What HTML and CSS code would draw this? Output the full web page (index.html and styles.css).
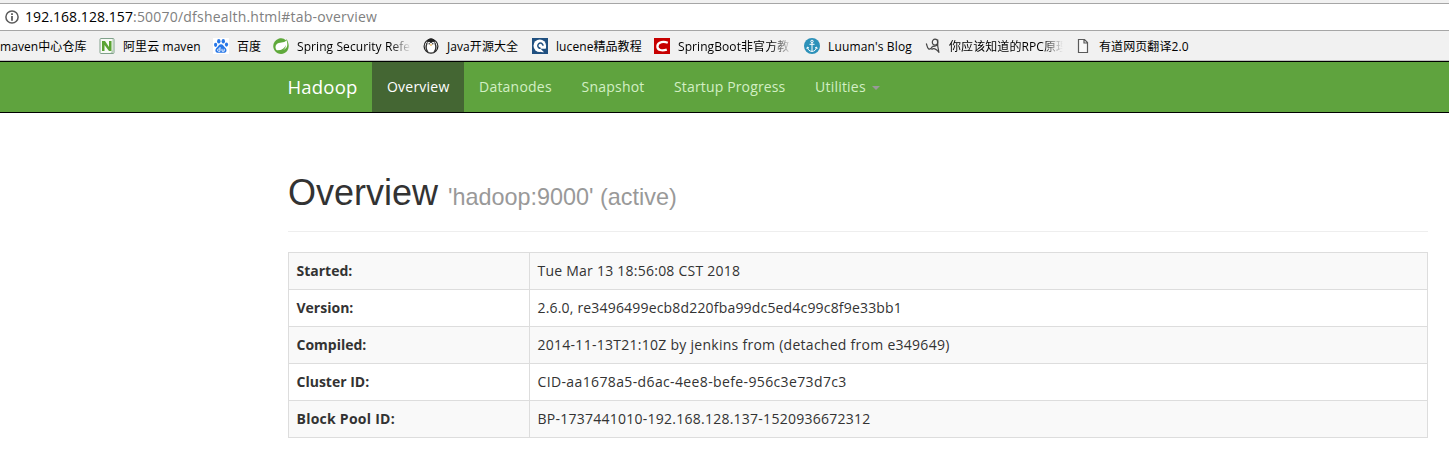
FILE: index.html
```html
<!DOCTYPE html>
<html lang="zh-CN">
<head>
<meta charset="utf-8">
<title>Namenode information</title>
<link rel="stylesheet" href="styles.css">
</head>
<body>
<div class="address">
  <svg class="info" width="14" height="14" viewBox="0 0 14 14"><circle cx="7" cy="7" r="6.1" fill="none" stroke="#5a5a5a" stroke-width="1.5"/><path d="M6.1 3.2h1.8v1.7H6.1zM6.1 6.1h1.8v4.6H6.1z" fill="#5a5a5a"/></svg>
  <span class="url"><span class="host">192.168.128.157</span><span class="path">:50070/dfshealth.html#tab-overview</span></span>
</div>
<div class="bookmarks">
  <div class="mark"><span class="label w87">maven中心仓库</span></div>
  <div class="mark">
    <svg width="16" height="16" viewBox="0 0 16 16"><rect x="1" y=".5" width="14" height="15" rx="1" fill="#f7faf5" stroke="#80a18b"/><path d="M13.5 1v11l-2 3H15V1z" fill="#b8ceb9"/><path d="M3 13V3h3l4 6V3h2.500v10H10L5.500 7v6z" fill="#59a332"/></svg>
    <span class="label w78">阿里云 maven</span>
  </div>
  <div class="mark">
    <svg width="16" height="16" viewBox="0 0 16 16"><path d="M0 0h16v16H0z" fill="#fff"/><g fill="#2878e8"><ellipse cx="5.800" cy="3.200" rx="1.700" ry="2.200"/><ellipse cx="10.300" cy="3.200" rx="1.700" ry="2.200"/><ellipse cx="2.600" cy="6.800" rx="1.600" ry="2.100"/><ellipse cx="13.500" cy="6.600" rx="1.600" ry="2.100"/><path d="M8 6.300c2 0 2.300 1.700 4 3.200 2.600 2.200 1.600 5.500-1.200 5.300-2-.2-3.600-.2-5.600 0C2.300 15 1.300 11.800 4 9.500 5.700 8 6 6.300 8 6.300z"/></g><path d="M7 9v4.300H5.500c-1.300 0-1.300-2.300 0-2.300H7M9 10.800v2.400h2.200v-2.400" fill="none" stroke="#fff" stroke-width=".9"/></svg>
    <span class="label w24">百度</span>
  </div>
  <div class="mark">
    <svg width="16" height="16" viewBox="0 0 16 16"><path d="M13.800 1.200C15.700 5 16.600 9 14.500 12.500 11.500 17 5 17 2 13-1.500 8.500.5 2.500 5.500.7c3-1 5.500-.4 7.300 1.500z" fill="#5fa93b"/><path d="M13.500 2.300C11 5.600 6 3.600 3.600 6.300c-1.800 2-1.300 4.800.4 6.200 5.600.2 10.600-1.400 10.300-6.300 0-1.500-.3-2.800-.8-3.900z" fill="#fff"/><path d="M3 12.500c4 0 8-1.200 10-5.600-.5 4.100-3.600 7.300-9 6.700z" fill="#5fa93b"/></svg>
    <span class="label w114 fade">Spring Security Refe</span>
  </div>
  <div class="mark">
    <svg width="16" height="16" viewBox="0 0 16 16"><circle cx="8" cy="8.300" r="6.900" fill="#fff" stroke="#222" stroke-width="1.200"/><path d="M3.800 5C4.200 1.500 6 .3 8 .3s3.800 1.200 4.200 4.700L10 3.800 8 5.200 6 3.800z" fill="#222"/><path d="M4 5c-1.500 4-1 7 1 9M12 5c1.500 4 1 7-1 9" fill="none" stroke="#333" stroke-width="1.400"/><circle cx="6.200" cy="5.800" r=".7" fill="#222"/><circle cx="9.800" cy="5.800" r=".7" fill="#222"/><path d="M6.500 6.500h3L8 8z" fill="#e6a22c"/></svg>
    <span class="label w73">Java开源大全</span>
  </div>
  <div class="mark">
    <svg width="16" height="16" viewBox="0 0 16 16"><path d="M0 0h16v16H0z" fill="#205080"/><circle cx="7.800" cy="7.800" r="6.300" fill="#fff"/><path d="M8.500 10.500V16H16V10.500z" fill="#205080"/><path d="M12 14.200C9 14.800 6 13 5.800 10L9 11.200z" fill="#fff"/><path d="M11 7.800A2.600 2.600 0 1 0 8.600 10.300" fill="none" stroke="#205080" stroke-width="1.500"/><path d="M9 8h5v2.500H9z" fill="#fff"/></svg>
    <span class="label w86">lucene精品教程</span>
  </div>
  <div class="mark">
    <svg width="16" height="16" viewBox="0 0 16 16"><path d="M0 0h16v16H0z" fill="#c70000"/><path d="M13.800 4.700C10 3.200 4 3.400 3.400 8c-.4 4.200 4.600 5.200 9.400 3.600" fill="none" stroke="#fff" stroke-width="2.300"/></svg>
    <span class="label w114 fade">SpringBoot非官方教</span>
  </div>
  <div class="mark">
    <svg width="16" height="16" viewBox="0 0 16 16"><circle cx="8" cy="8" r="8" fill="#2c91b9"/><g fill="none" stroke="#fff"><circle cx="8" cy="3.400" r="1.200"/><path d="M8 4.600v9M5.500 6.300h5M3.400 9.300c.5 2.700 2.300 4 4.600 4.100 2.300-.1 4.100-1.400 4.600-4.100M2.800 10.800l.6-1.700 1.600.9M13.200 10.800l-.6-1.700-1.600.9"/></g></svg>
    <span class="label w85 blog">Luuman's Blog</span>
  </div>
  <div class="mark">
    <svg width="16" height="16" viewBox="0 0 16 16"><g fill="none" stroke="#444" stroke-width="1.200"><path d="M1.300 5.500c.7 1.500.8 4.500 2.300 5.400 1.800.6 3.200-.9 4-2.700"/><ellipse cx="10" cy="4.200" rx="2.700" ry="3"/><path d="M12.700 1.500C12.300 6 12.800 10.500 14 14.800M12.700 5.500C12.300 7.500 10 8.500 7.600 8.200M6.500 11.600C8.500 9.800 11 10.500 13.700 14"/></g></svg>
    <span class="label w114 fade">你应该知道的RPC原理</span>
  </div>
  <div class="mark">
    <svg width="16" height="16" viewBox="0 0 16 16"><path d="M3.500 1.500h6l3 3v10h-9zM9 1.500V5h3.500" fill="#f9f9f9" stroke="#5a5a5a" stroke-width="1.200"/></svg>
    <span class="label">有道网页翻译2.0</span>
  </div>
</div>
<nav class="navbar">
  <a class="brand">Hadoop</a>
  <a class="item active t-over">Overview</a>
  <a class="item t-data">Datanodes</a>
  <a class="item t-snap">Snapshot</a>
  <a class="item t-start">Startup Progress</a>
  <a class="item t-util">Utilities<span class="caret"></span></a>
</nav>
<main class="container">
  <h1>Overview <small>'hadoop:9000' (active)</small></h1>
  <table>
    <tr><th>Started:</th><td class="date">Tue Mar 13 18:56:08 CST 2018</td></tr>
    <tr><th>Version:</th><td class="version">2.6.0, re3496499ecb8d220fba99dc5ed4c99c8f9e33bb1</td></tr>
    <tr><th>Compiled:</th><td class="build">2014-11-13T21:10Z by jenkins from (detached from e349649)</td></tr>
    <tr><th>Cluster ID:</th><td class="cluster">CID-aa1678a5-d6ac-4ee8-befe-956c3e73d7c3</td></tr>
    <tr><th class="wide">Block Pool ID:</th><td class="pool">BP-1737441010-192.168.128.137-1520936672312</td></tr>
  </table>
</main>
</body>
</html>
```
FILE: styles.css
```css
* { box-sizing: border-box; }
body { margin: 0; height: 459px; overflow: hidden; background: #fff; color: #333; font: 14px/20px "Open Sans", "Noto Sans CJK SC", sans-serif; }
svg { flex: none; display: block; }
.address { height: 31px; border-top: 3px solid #f1f1f1; border-bottom: 1px solid #a6a6a6; box-shadow: inset 0 1px #a6a6a6; display: flex; align-items: center; gap: 6px; padding-left: 5px; white-space: nowrap; }
.url { color: #808080; }
.host { color: #000; letter-spacing: .06px; }
.path { letter-spacing: .21px; }
.bookmarks { height: 30px; background: #f1f1f1; border-bottom: 1px solid #c0c0c0; display: flex; align-items: center; gap: 12px; color: #000; font-size: 12px; white-space: nowrap; }
.mark { flex: none; display: flex; align-items: center; gap: 8px; }
.label { line-height: 20px; padding-top: 2px; letter-spacing: .08px; }
.blog { letter-spacing: .14px; }
.w87 { width: 87px; } .w78 { width: 78px; } .w24 { width: 24px; } .w114 { width: 114px; }
.w73 { width: 73px; } .w86 { width: 86px; } .w85 { width: 85px; }
.fade { -webkit-mask-image: linear-gradient(90deg, #000 82%, transparent); mask-image: linear-gradient(90deg, #000 82%, transparent); }
.navbar { height: 52px; background: #5fa33e; border: solid #000; border-width: 1px 0; display: flex; padding-left: 272px; white-space: nowrap; }
.brand { width: 100px; padding: 15px 0 0 15.5px; color: #fff; font-size: 18.5px; letter-spacing: .2px; }
.item { padding: 15px 0 0 15px; color: #d2efc4; letter-spacing: .22px; }
.active { background: #446633; color: #fff; }
.t-over { width: 92px; } .t-data { width: 102.5px; } .t-snap { width: 92.5px; } .t-start { width: 141px; letter-spacing: .15px; } .t-util { width: 96px; }
.caret { display: inline-block; margin-left: 6px; vertical-align: middle; border: 4px solid transparent; border-top-color: #999; border-bottom: 0; }
.container { padding: 59px 21px 0 288px; }
h1 { margin: 0 0 20px; height: 60px; padding-top: 1px; border-bottom: 1px solid #eee; font: 36px/40px "Liberation Sans", Arial, sans-serif; white-space: nowrap; }
small { color: #999; font-size: 23.4px; }
table { width: 1140px; border-collapse: collapse; table-layout: fixed; }
th, td { height: 37px; padding: 0 7.5px; border: 1px solid #ddd; text-align: left; white-space: nowrap; }
th { width: 241px; font-weight: 700; }
.wide { letter-spacing: .25px; }
.date { letter-spacing: .24px; }
.version { letter-spacing: .18px; }
.build { letter-spacing: .27px; }
.cluster { letter-spacing: .37px; }
.pool { letter-spacing: .25px; }
tr:nth-child(odd) { background: #f9f9f9; }
```
